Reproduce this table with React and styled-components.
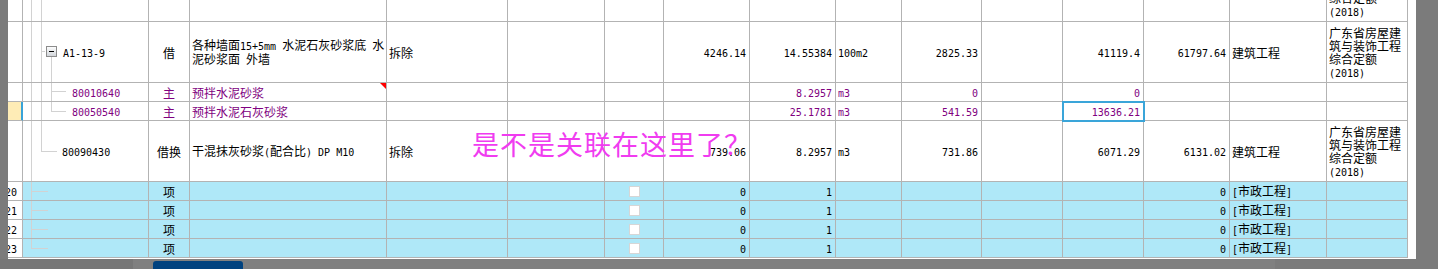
import React from "react";
import styled, { createGlobalStyle } from "styled-components";

const LINE = "#b3b3b3";
const GUIDE = "#d2d2d2";
const COLS = [15, 126, 41, 197, 121, 97, 59, 86, 86, 66, 80, 81, 81, 86, 97, 81];
const ALIGNS = ["right", "left", "center", "left", "left", "left", "center", "right", "right", "left", "right", "right", "right", "right", "left", "left"];
const JUSTIFY = { left: "flex-start", center: "center", right: "flex-end" };
const HAN = /([\u2e80-\u9fff\uf900-\ufaff\uff01-\uff60\u3000-\u303f]+)/;

const NORM = "广东省房屋建筑与装饰工程综合定额(2018)";
const blank = (n) => Array(n).fill("");

const blueRow = (num, last) => ({
  h: 19,
  blue: true,
  tree: { v: [[8, 0, last ? 9 : 18]], h: [[9, 8, 25]] },
  cells: [num, "", "项", "", "", "", "[]", "0", "1", "", "", "", "", "0", "[市政工程]", ""],
});

const ROWS = [
  { h: 61, tree: { v: [[8, 0, 60], [18, 0, 60]] }, cells: [...blank(15), NORM] },
  {
    h: 61,
    indent: 40,
    tree: { v: [[8, 0, 60], [18, 0, 60], [28, 35, 60]], h: [[29, 18, 22]], box: [23, 24] },
    cells: ["", "A1-13-9", "借", "各种墙面15+5mm 水泥石灰砂浆底 水泥砂浆面 外墙", "拆除", "", "", "4246.14", "14.55384", "100m2", "2825.33", "", "41119.4", "61797.64", "建筑工程", NORM],
  },
  {
    h: 19,
    purple: true,
    indent: 49,
    note: 3,
    tree: { v: [[8, 0, 18], [18, 0, 18], [28, 0, 18]], h: [[8, 28, 43]] },
    cells: ["", "80010640", "主", "预拌水泥砂浆", "", "", "", "", "8.2957", "m3", "0", "", "0", "", "", ""],
  },
  {
    h: 19,
    purple: true,
    current: true,
    indent: 49,
    selected: 12,
    tree: { v: [[8, 0, 18], [18, 0, 18], [28, 0, 9]], h: [[9, 28, 43]] },
    cells: ["", "80050540", "主", "预拌水泥石灰砂浆", "", "", "", "", "25.1781", "m3", "541.59", "", "13636.21", "", "", ""],
  },
  {
    h: 61,
    indent: 39,
    tree: { v: [[8, 0, 60], [18, 0, 30]], h: [[30, 18, 34]] },
    cells: ["", "80090430", "借换", "干混抹灰砂浆(配合比) DP M10", "拆除", "", "", "739.06", "8.2957", "m3", "731.86", "", "6071.29", "6131.02", "建筑工程", NORM],
  },
  blueRow("20"),
  blueRow("21"),
  blueRow("22"),
  blueRow("23", true),
];

const GlobalStyle = createGlobalStyle`
  html, body { margin: 0; padding: 0; background: #7b7b7b; }
  body { width: 1438px; height: 269px; overflow: hidden; }
`;

const Screen = styled.div`
  width: 1438px;
  height: 269px;
  background: #7b7b7b;
  display: flex;
  flex-direction: column;
`;

const Main = styled.div`
  display: flex;
  height: 259px;
  padding-left: 8px;
`;

const Panel = styled.div`
  position: relative;
  width: 1408px;
  height: 259px;
  background: #fff;
  overflow: hidden;
`;

const Sheet = styled.div`
  margin-top: -39px;
`;

const Row = styled.div`
  display: grid;
  grid-template-columns: ${COLS.map((w) => w + "px").join(" ")};
  height: ${({ $h }) => $h}px;
  color: ${({ $purple }) => ($purple ? "#800080" : "#000")};
  font-family: "Noto Sans CJK SC", sans-serif;
  font-size: 12px;
  line-height: 13px;
`;

const Cell = styled.div`
  position: relative;
  box-sizing: border-box;
  min-width: 0;
  display: flex;
  align-items: center;
  justify-content: ${({ $align }) => JUSTIFY[$align]};
  padding: ${({ $align, $pad }) =>
    $pad != null ? `0 0 0 ${$pad}px` : $align === "right" ? "0 3px 0 0" : $align === "center" ? "0" : "0 0 0 2px"};
  border-right: 1px solid ${LINE};
  border-bottom: 1px solid ${LINE};
  background: ${({ $bg }) => $bg || "transparent"};
  overflow: hidden;
  white-space: ${({ $nowrap }) => ($nowrap ? "nowrap" : "normal")};
`;

const HeaderCell = styled(Cell)`
  display: block;
  direction: rtl;
  text-align: right;
  padding: 0 5px 0 0;
  line-height: 18px;
  white-space: nowrap;
  ${({ $current }) =>
    $current &&
    `
    background: #feecb6;
    border-right-color: #38a3d9;
    box-shadow: inset -1px 0 #38a3d9;
  `}
`;

const NoteCell = styled(Cell)`
  &::after {
    content: "";
    position: absolute;
    top: 0;
    right: 0;
    width: 0;
    height: 0;
    border-style: solid;
    border-width: 0 6px 6px 0;
    border-color: transparent #f00 transparent transparent;
  }
`;

const SelectedCell = styled(Cell)`
  overflow: visible;
  z-index: 2;
  outline: 2px solid #3aa5d9;
  outline-offset: -1px;
`;

const Content = styled.span`
  display: block;
  min-width: 0;
  position: relative;
`;

const RowNum = styled.span`
  font-family: "DejaVu Sans Mono", "Liberation Mono", monospace;
  font-size: 10px;
  direction: ltr;
  unicode-bidi: isolate;
`;

const Han = styled.span`
  font-family: "Noto Sans CJK SC", sans-serif;
  font-size: 12px;
`;

const Lat = styled.span`
  font-family: "DejaVu Sans Mono", "Liberation Mono", monospace;
  font-size: 10px;
  line-height: 10px;
`;

const Check = styled.span`
  display: block;
  width: 11px;
  height: 11px;
  box-sizing: border-box;
  background: #fff;
  border: 1px solid #d6d6d6;
`;

const Guides = styled.svg`
  position: absolute;
  left: 0;
  top: 0;
  pointer-events: none;
`;

const Annotation = styled.div`
  position: absolute;
  left: 464px;
  top: 130px;
  z-index: 3;
  font-family: "Noto Sans CJK SC", sans-serif;
  font-size: 27px;
  line-height: 27px;
  letter-spacing: 1px;
  color: #f03cf0;
  white-space: nowrap;
`;

const BottomBar = styled.div`
  display: flex;
  height: 10px;
  width: 1416px;
`;

const BarEnd = styled.div`
  width: 133px;
  background: #777;
`;

const Track = styled.div`
  width: 1142px;
  display: flex;
  align-items: flex-end;
  background: #808080;
`;

const Thumb = styled.div`
  margin-left: 20px;
  width: 90px;
  height: 8px;
  background: #00427f;
  border-radius: 3px 3px 0 0;
`;

const Txt = ({ text }) =>
  String(text)
    .split(HAN)
    .map((part, i) => (part === "" ? null : i % 2 ? <Han key={i}>{part}</Han> : <Lat key={i}>{part}</Lat>));

const Tree = ({ tree, h }) => (
  <Guides width={125} height={h} shapeRendering="crispEdges">
    {(tree.v || []).map(([x, y1, y2], i) => (
      <line key={"v" + i} x1={x + 0.5} x2={x + 0.5} y1={y1} y2={y2} stroke={GUIDE} />
    ))}
    {(tree.h || []).map(([y, x1, x2], i) => (
      <line key={"h" + i} x1={x1} x2={x2} y1={y + 0.5} y2={y + 0.5} stroke={GUIDE} />
    ))}
    {tree.box && (
      <g>
        <defs>
          <linearGradient id="boxFill" x1="0" y1="0" x2="0" y2="1">
            <stop offset="0" stopColor="#ffffff" />
            <stop offset="1" stopColor="#cfd3d8" />
          </linearGradient>
        </defs>
        <rect x={tree.box[0] + 0.5} y={tree.box[1] + 0.5} width={10} height={10} fill="url(#boxFill)" stroke="#8c8c8c" />
        <line x1={tree.box[0] + 3} x2={tree.box[0] + 8} y1={tree.box[1] + 5.5} y2={tree.box[1] + 5.5} stroke="#000" />
      </g>
    )}
  </Guides>
);

const renderCell = (row, value, i) => {
  const align = ALIGNS[i];
  if (i === 0) {
    return (
      <HeaderCell key={i} $align="right" $current={row.current}>
        <RowNum>{value}</RowNum>
      </HeaderCell>
    );
  }
  const bg = row.blue ? "#afe8f8" : undefined;
  if (i === 1) {
    return (
      <Cell key={i} $align="left" $pad={row.indent || 0} $bg={bg} $nowrap>
        <Tree tree={row.tree} h={row.h - 1} />
        <Content>
          <Txt text={value} />
        </Content>
      </Cell>
    );
  }
  const Kind = row.note === i ? NoteCell : row.selected === i ? SelectedCell : Cell;
  return (
    <Kind key={i} $align={align} $bg={bg} $nowrap={align === "right"}>
      {value === "[]" ? (
        <Check />
      ) : (
        value && (
          <Content>
            <Txt text={value} />
          </Content>
        )
      )}
    </Kind>
  );
};

export default function App() {
  return (
    <>
      <GlobalStyle />
      <Screen>
        <Main>
          <Panel>
            <Sheet>
              {ROWS.map((row, r) => (
                <Row key={r} $h={row.h} $purple={row.purple}>
                  {row.cells.map((value, i) => renderCell(row, value, i))}
                </Row>
              ))}
            </Sheet>
            <Annotation>是不是关联在这里了？</Annotation>
          </Panel>
        </Main>
        <BottomBar>
          <BarEnd />
          <Track>
            <Thumb />
          </Track>
        </BottomBar>
      </Screen>
    </>
  );
}
